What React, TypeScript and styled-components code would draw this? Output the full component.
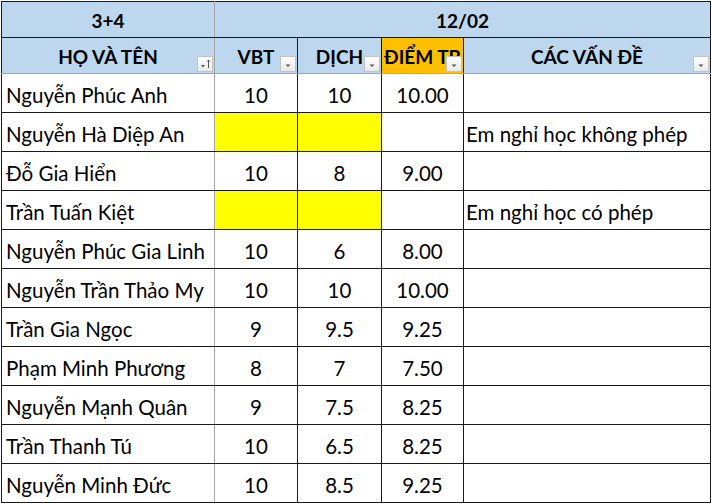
import React from 'react';
import styled, { createGlobalStyle } from 'styled-components';

const GlobalStyle = createGlobalStyle`
  body {
    margin: 0;
    background: #ffffff;
    font-family: Lato, "Noto Sans", "Liberation Sans", sans-serif;
  }
`;

const Wrap = styled.div`
  padding: 1px 0 0 1px;
`;

const Sheet = styled.table`
  border-collapse: collapse;
  table-layout: fixed;
  width: 709px;
  color: #000;
`;

const HeadRow = styled.tr`
  height: 36px;
`;

const BodyRow = styled.tr`
  height: 39px;
`;

const HeadCell = styled.th<{ $fill?: string; $greyRight?: boolean; $greyBottom?: boolean; $left?: boolean }>`
  position: relative;
  box-sizing: border-box;
  padding: ${(p) => (p.$left ? '3px 0 0 2px' : '3px 0 0 0')};
  vertical-align: middle;
  background: ${(p) => p.$fill || '#bdd7ee'};
  border: 1px solid #1a1a1a;
  border-right-color: ${(p) => (p.$greyRight ? '#a5a5a5' : '#1a1a1a')};
  border-bottom-color: ${(p) => (p.$greyBottom ? '#a5a5a5' : '#1a1a1a')};
  font-size: 19px;
  font-weight: 700;
  text-align: ${(p) => (p.$left ? 'left' : 'center')};
  white-space: nowrap;
  overflow: hidden;
  line-height: 22px;
`;

const Cell = styled.td<{ $fill?: string; $greyRight?: boolean; $align?: string; $indent?: number }>`
  box-sizing: border-box;
  padding: 3px 0 0 ${(p) => (p.$align === 'left' ? `${p.$indent ?? 4}px` : '0')};
  vertical-align: middle;
  background: ${(p) => p.$fill || '#ffffff'};
  border: 1px solid #1a1a1a;
  border-right-color: ${(p) => (p.$greyRight ? '#a5a5a5' : '#1a1a1a')};
  font-size: 20.5px;
  text-align: ${(p) => p.$align || 'center'};
  white-space: nowrap;
  overflow: hidden;
  line-height: 22px;
`;

const FilterBtn = styled.span`
  position: absolute;
  right: 1px;
  bottom: 1px;
  width: 14px;
  height: 14px;
  border: 1px solid #c3c3c3;
  background: linear-gradient(#ffffff, #e9e9e9);
  display: flex;
  align-items: center;
  justify-content: center;
`;

function Filter({ sorted }: { sorted?: boolean }) {
  return (
    <FilterBtn>
      <svg width="14" height="14" viewBox="0 0 14 14">
        {sorted ? (
          <>
            <path d="M3 8 L7 8 L5 10.5 Z" fill="#555" />
            <path d="M10.5 3 L10.5 11 M9 4.5 L10.5 3 L12 4.5" stroke="#555" strokeWidth="1" fill="none" />
          </>
        ) : (
          <path d="M4.5 7.5 L9.5 7.5 L7 10 Z" fill="#555" />
        )}
      </svg>
    </FilterBtn>
  );
}

type Row = { name: string; vbt?: string; dich?: string; tb?: string; note?: string; absent?: boolean };

const rows: Row[] = [
  { name: 'Nguyễn Phúc Anh', vbt: '10', dich: '10', tb: '10.00' },
  { name: 'Nguyễn Hà Diệp An', absent: true, note: 'Em nghỉ học không phép' },
  { name: 'Đỗ Gia Hiển', vbt: '10', dich: '8', tb: '9.00' },
  { name: 'Trần Tuấn Kiệt', absent: true, note: 'Em nghỉ học có phép' },
  { name: 'Nguyễn Phúc Gia Linh', vbt: '10', dich: '6', tb: '8.00' },
  { name: 'Nguyễn Trần Thảo My', vbt: '10', dich: '10', tb: '10.00' },
  { name: 'Trần Gia Ngọc', vbt: '9', dich: '9.5', tb: '9.25' },
  { name: 'Phạm Minh Phương', vbt: '8', dich: '7', tb: '7.50' },
  { name: 'Nguyễn Mạnh Quân', vbt: '9', dich: '7.5', tb: '8.25' },
  { name: 'Trần Thanh Tú', vbt: '10', dich: '6.5', tb: '8.25' },
  { name: 'Nguyễn Minh Đức', vbt: '10', dich: '8.5', tb: '9.25' },
];

export default function App() {
  return (
    <Wrap>
      <GlobalStyle />
      <Sheet>
        <colgroup>
          <col style={{ width: 213 }} />
          <col style={{ width: 83 }} />
          <col style={{ width: 84 }} />
          <col style={{ width: 82 }} />
          <col style={{ width: 247 }} />
        </colgroup>
        <thead>
          <HeadRow>
            <HeadCell $greyRight>3+4</HeadCell>
            <HeadCell colSpan={4}>12/02</HeadCell>
          </HeadRow>
          <HeadRow>
            <HeadCell $greyRight $greyBottom>
              HỌ VÀ TÊN
              <Filter sorted />
            </HeadCell>
            <HeadCell $greyBottom>
              VBT
              <Filter />
            </HeadCell>
            <HeadCell $greyBottom>
              DỊCH
              <Filter />
            </HeadCell>
            <HeadCell $greyBottom $fill="#ffc000" $left>
              ĐIỂM TB
              <Filter />
            </HeadCell>
            <HeadCell $greyBottom>
              CÁC VẤN ĐỀ
              <Filter />
            </HeadCell>
          </HeadRow>
        </thead>
        <tbody>
          {rows.map((r) => (
            <BodyRow key={r.name}>
              <Cell $greyRight $align="left" $indent={4}>{r.name}</Cell>
              <Cell $fill={r.absent ? '#ffff00' : undefined}>{r.vbt}</Cell>
              <Cell $fill={r.absent ? '#ffff00' : undefined}>{r.dich}</Cell>
              <Cell>{r.tb}</Cell>
              <Cell $align="left" $indent={2}>{r.note}</Cell>
            </BodyRow>
          ))}
        </tbody>
      </Sheet>
    </Wrap>
  );
}
